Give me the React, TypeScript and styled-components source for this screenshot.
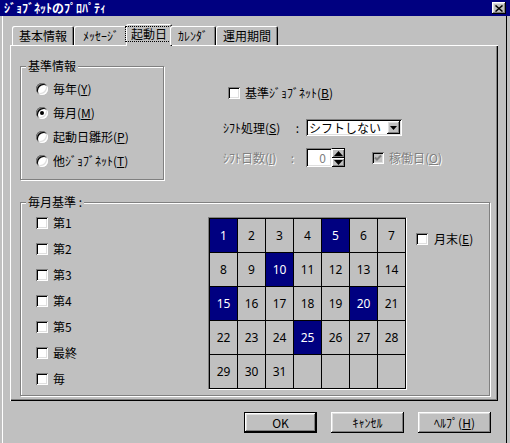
import React from "react";
import styled, { createGlobalStyle, css } from "styled-components";

const GlobalStyle = createGlobalStyle`
  html, body { margin: 0; padding: 0; background: #c0c0c0; }
  body {
    font-family: "Noto Sans CJK JP", "Noto Sans", sans-serif;
    font-size: 12px;
    color: #000;
  }
  * { box-sizing: border-box; }
  u { text-underline-offset: 1px; }
`;

// win95 bevels
const raised = css`
  box-shadow: inset -1px -1px #000, inset 1px 1px #fff, inset -2px -2px #808080, inset 2px 2px #dfdfdf;
`;
const sunken = css`
  box-shadow: inset 1px 1px #808080, inset -1px -1px #fff, inset 2px 2px #000, inset -2px -2px #dfdfdf;
`;

const Window = styled.div`
  width: 510px;
  height: 443px;
  background: #c0c0c0;
  display: flex;
  flex-direction: column;
  overflow: hidden;
  box-shadow: inset 2px 0 #c0c0c0, inset 3px 0 #fff, inset -3px 0 #c0c0c0, inset -4px 0 #000;
`;

const TitleBar = styled.div`
  height: 16px;
  background: #000080;
  color: #fff;
  font-weight: bold;
  line-height: 16px;
  display: flex;
  align-items: center;
  justify-content: space-between;
  padding: 0 4px;
  white-space: nowrap;
`;

const CloseButton = styled.div`
  width: 14px;
  height: 12px;
  background: #c0c0c0;
  display: flex;
  align-items: center;
  justify-content: center;
  ${raised}
`;

const Body = styled.div`
  flex: 1;
  display: flex;
  flex-direction: column;
  padding: 8px 12px 0 10px;
`;

const TabStrip = styled.div`
  height: 21px;
  display: flex;
  align-items: flex-end;
  padding-left: 2px;
  position: relative;
  z-index: 2;
`;

const Tab = styled.div<{ $w: number; $active?: boolean }>`
  width: ${({ $w }) => $w}px;
  height: ${({ $active }) => ($active ? 22 : 19)}px;
  margin: ${({ $active }) => ($active ? "0 -2px -1px -2px" : "0")};
  flex: none;
  background: #c0c0c0;
  border-radius: 2px 2px 0 0;
  box-shadow: inset 1px 1px #fff, inset -1px 0 #000, inset -2px 0 #808080;
  display: flex;
  align-items: center;
  justify-content: center;
  padding-bottom: ${({ $active }) => ($active ? 2 : 0)}px;
  white-space: nowrap;
`;

const FocusLabel = styled.span`
  border: 1px dotted #000;
  padding: 0 5px;
  line-height: 14px;
`;

const Panel = styled.div`
  height: 356px;
  background: #c0c0c0;
  position: relative;
  z-index: 1;
  padding: 21px 8px 0 10px;
  box-shadow: inset 1px 1px #fff, inset -1px -1px #000, inset -2px -2px #808080;
`;

const TopRow = styled.div`
  display: flex;
`;

const GroupBox = styled.div<{ $w: number; $h: number }>`
  position: relative;
  width: ${({ $w }) => $w}px;
  height: ${({ $h }) => $h}px;
  border: 1px solid #808080;
  box-shadow: inset 1px 1px #fff, 1px 1px #fff;
  flex: none;
`;

const Legend = styled.span`
  position: absolute;
  top: -8px;
  left: 5px;
  padding: 0 2px;
  line-height: 14px;
  background: #c0c0c0;
  white-space: nowrap;
`;

const RadioList = styled.div`
  display: flex;
  flex-direction: column;
  padding: 10px 0 0 15px;
`;

const OptionRow = styled.label<{ $h?: number; $gap?: number }>`
  display: flex;
  align-items: center;
  height: ${({ $h }) => $h ?? 24}px;
  gap: ${({ $gap }) => $gap ?? 5}px;
  white-space: nowrap;
`;

const RadioCircle = styled.span<{ $on?: boolean }>`
  width: 12px;
  height: 12px;
  border-radius: 50%;
  background: #fff;
  flex: none;
  display: flex;
  align-items: center;
  justify-content: center;
  box-shadow: inset 1px 1px #808080, inset -1px -1px #fff, inset 2px 2px #000, inset -2px -2px #dfdfdf;
  &::after {
    content: "";
    width: 4px;
    height: 4px;
    border-radius: 50%;
    background: #000;
    display: ${({ $on }) => ($on ? "block" : "none")};
  }
`;

const CheckBox = styled.span<{ $disabled?: boolean }>`
  width: 12px;
  height: 12px;
  flex: none;
  background: ${({ $disabled }) => ($disabled ? "#c0c0c0" : "#fff")};
  display: flex;
  align-items: center;
  justify-content: center;
  ${sunken}
`;

const Text = styled.span<{ $disabled?: boolean }>`
  color: ${({ $disabled }) => ($disabled ? "#808080" : "#000")};
  text-shadow: ${({ $disabled }) => ($disabled ? "1px 1px #fff" : "none")};
  line-height: 14px;
`;

const RightColumn = styled.div`
  margin-left: 59px;
  display: flex;
  flex-direction: column;
`;

const FormRow = styled.div<{ $mt: number; $h: number; $indent?: number }>`
  display: flex;
  align-items: center;
  margin-top: ${({ $mt }) => $mt}px;
  height: ${({ $h }) => $h}px;
  padding-left: ${({ $indent }) => $indent ?? 0}px;
`;

const FieldLabel = styled.div<{ $pr: number }>`
  width: 83px;
  display: flex;
  justify-content: space-between;
  padding-right: ${({ $pr }) => $pr}px;
  white-space: nowrap;
`;

const Combo = styled.div`
  width: 96px;
  height: 17px;
  background: #fff;
  display: flex;
  align-items: center;
  justify-content: space-between;
  padding: 2px 2px 2px 3px;
  ${sunken}
`;

const ComboText = styled.span`
  line-height: 13px;
  white-space: nowrap;
`;

const ArrowButton = styled.div`
  width: 13px;
  height: 13px;
  background: #c0c0c0;
  display: flex;
  align-items: center;
  justify-content: center;
  ${raised}
`;

const SpinEdit = styled.div`
  width: 26px;
  height: 19px;
  background: #fff;
  color: #808080;
  text-align: right;
  padding: 2px 6px 0 0;
  line-height: 15px;
  ${sunken}
`;

const SpinButtons = styled.div`
  width: 13px;
  height: 19px;
  display: flex;
  flex-direction: column;
  background: #000;
  padding: 1px 1px 1px 0;
  gap: 1px;
`;

const SpinHalf = styled.div`
  flex: 1;
  background: #c0c0c0;
  display: flex;
  align-items: center;
  justify-content: center;
  box-shadow: inset 1px 1px #fff, inset -1px -1px #808080;
`;

const WorkDay = styled.label`
  display: flex;
  align-items: center;
  gap: 5px;
  margin-left: 27px;
  white-space: nowrap;
`;

const MonthlyBox = styled(GroupBox)`
  margin-top: 22px;
  display: flex;
  padding: 14px 0 0 15px;
`;

const CheckList = styled.div`
  width: 172px;
  margin-top: -7px;
  display: flex;
  flex-direction: column;
  flex: none;
`;

const Calendar = styled.div`
  display: grid;
  grid-template-columns: repeat(7, 27px);
  grid-auto-rows: 33px;
  gap: 1px;
  padding: 1px;
  background: #000;
  border: 1px solid;
  border-color: #808080 #fff #fff #808080;
  align-self: flex-start;
  flex: none;
`;

const DayCell = styled.div<{ $on?: boolean }>`
  background: ${({ $on }) => ($on ? "#000080" : "#c0c0c0")};
  color: ${({ $on }) => ($on ? "#fff" : "#000")};
  display: flex;
  align-items: center;
  justify-content: center;
  font-family: "Noto Sans", "Noto Sans CJK JP", sans-serif;
`;

const MonthEnd = styled.label`
  display: flex;
  align-items: center;
  gap: 6px;
  margin: 16px 0 0 9px;
  height: 12px;
  align-self: flex-start;
  white-space: nowrap;
`;

const ButtonRow = styled.div`
  display: flex;
  justify-content: flex-end;
  gap: 14px;
  margin-top: 11px;
  padding-right: 7px;
`;

const Button = styled.div<{ $default?: boolean }>`
  width: 73px;
  height: 21px;
  display: flex;
  align-items: center;
  justify-content: center;
  background: #c0c0c0;
  white-space: nowrap;
  border: ${({ $default }) => ($default ? "1px solid #000" : "none")};
  ${raised}
`;

const Check = ({ color = "#000" }: { color?: string }) => (
  <svg width="8" height="8" viewBox="0 0 8 8">
    <path d="M1 3.5 L3 5.5 L7 1.5" stroke={color} strokeWidth="2" fill="none" />
  </svg>
);

const Tri = ({ down, w = 7, h = 4 }: { down?: boolean; w?: number; h?: number }) => (
  <svg width={w} height={h} viewBox={`0 0 ${w} ${h}`}>
    <path d={down ? `M0 0 H${w} L${w / 2} ${h} Z` : `M0 ${h} H${w} L${w / 2} 0 Z`} fill="#000" />
  </svg>
);

const Mn = ({ k }: { k: string }) => (
  <>
    (<u>{k}</u>)
  </>
);

const tabs = [
  { label: "基本情報", w: 62 },
  { label: "ﾒｯｾｰｼﾞ", w: 54 },
  { label: "起動日", w: 46, active: true },
  { label: "ｶﾚﾝﾀﾞ", w: 46 },
  { label: "運用期間", w: 62 },
];

const radios: { label: string; key: string; on?: boolean }[] = [
  { label: "毎年", key: "Y" },
  { label: "毎月", key: "M", on: true },
  { label: "起動日雛形", key: "P" },
  { label: "他ｼﾞｮﾌﾞﾈｯﾄ", key: "T" },
];

const weekChecks = ["第1", "第2", "第3", "第4", "第5", "最終", "毎"];
const marked = [1, 5, 10, 15, 20, 25];

export default function App() {
  return (
    <>
      <GlobalStyle />
      <Window>
        <TitleBar>
          <span>ｼﾞｮﾌﾞﾈｯﾄのﾌﾟﾛﾊﾟﾃｨ</span>
          <CloseButton>
            <svg width="8" height="7" viewBox="0 0 8 7">
              <path d="M0.5 0.5 L7.5 6.5 M7.5 0.5 L0.5 6.5" stroke="#000" strokeWidth="1.5" />
            </svg>
          </CloseButton>
        </TitleBar>
        <Body>
          <TabStrip>
            {tabs.map((t) => (
              <Tab key={t.label} $w={t.w} $active={t.active}>
                {t.active ? <FocusLabel>{t.label}</FocusLabel> : t.label}
              </Tab>
            ))}
          </TabStrip>
          <Panel>
            <TopRow>
              <GroupBox $w={144} $h={114}>
                <Legend>基準情報</Legend>
                <RadioList>
                  {radios.map((r) => (
                    <OptionRow key={r.key}>
                      <RadioCircle $on={r.on} />
                      <Text>
                        {r.label}
                        <Mn k={r.key} />
                      </Text>
                    </OptionRow>
                  ))}
                </RadioList>
              </GroupBox>
              <RightColumn>
                <FormRow $mt={19} $h={16} $indent={5}>
                  <OptionRow $h={16}>
                    <CheckBox />
                    <Text>
                      基準ｼﾞｮﾌﾞﾈｯﾄ<Mn k="B" />
                    </Text>
                  </OptionRow>
                </FormRow>
                <FormRow $mt={18} $h={17}>
                  <FieldLabel $pr={7}>
                    <Text>
                      ｼﾌﾄ処理<Mn k="S" />
                    </Text>
                    <Text>:</Text>
                  </FieldLabel>
                  <Combo>
                    <ComboText>シフトしない</ComboText>
                    <ArrowButton>
                      <Tri down />
                    </ArrowButton>
                  </Combo>
                </FormRow>
                <FormRow $mt={12} $h={19}>
                  <FieldLabel $pr={12}>
                    <Text $disabled>
                      ｼﾌﾄ日数<Mn k="I" />
                    </Text>
                    <Text $disabled>:</Text>
                  </FieldLabel>
                  <SpinEdit>0</SpinEdit>
                  <SpinButtons>
                    <SpinHalf>
                      <Tri w={9} h={5} />
                    </SpinHalf>
                    <SpinHalf>
                      <Tri down w={9} h={5} />
                    </SpinHalf>
                  </SpinButtons>
                  <WorkDay>
                    <CheckBox $disabled>
                      <Check color="#808080" />
                    </CheckBox>
                    <Text $disabled>
                      稼働日<Mn k="O" />
                    </Text>
                  </WorkDay>
                </FormRow>
              </RightColumn>
            </TopRow>
            <MonthlyBox $w={470} $h={194}>
              <Legend>毎月基準 :</Legend>
              <CheckList>
                {weekChecks.map((w) => (
                  <OptionRow key={w} $h={26}>
                    <CheckBox />
                    <Text>{w}</Text>
                  </OptionRow>
                ))}
              </CheckList>
              <Calendar>
                {Array.from({ length: 35 }, (_, i) => i + 1).map((d) => (
                  <DayCell key={d} $on={marked.includes(d)}>
                    {d <= 31 ? d : ""}
                  </DayCell>
                ))}
              </Calendar>
              <MonthEnd>
                <CheckBox />
                <Text>
                  月末<Mn k="E" />
                </Text>
              </MonthEnd>
            </MonthlyBox>
          </Panel>
          <ButtonRow>
            <Button $default>OK</Button>
            <Button>ｷｬﾝｾﾙ</Button>
            <Button>
              ﾍﾙﾌﾟ<Mn k="H" />
            </Button>
          </ButtonRow>
        </Body>
      </Window>
    </>
  );
}
